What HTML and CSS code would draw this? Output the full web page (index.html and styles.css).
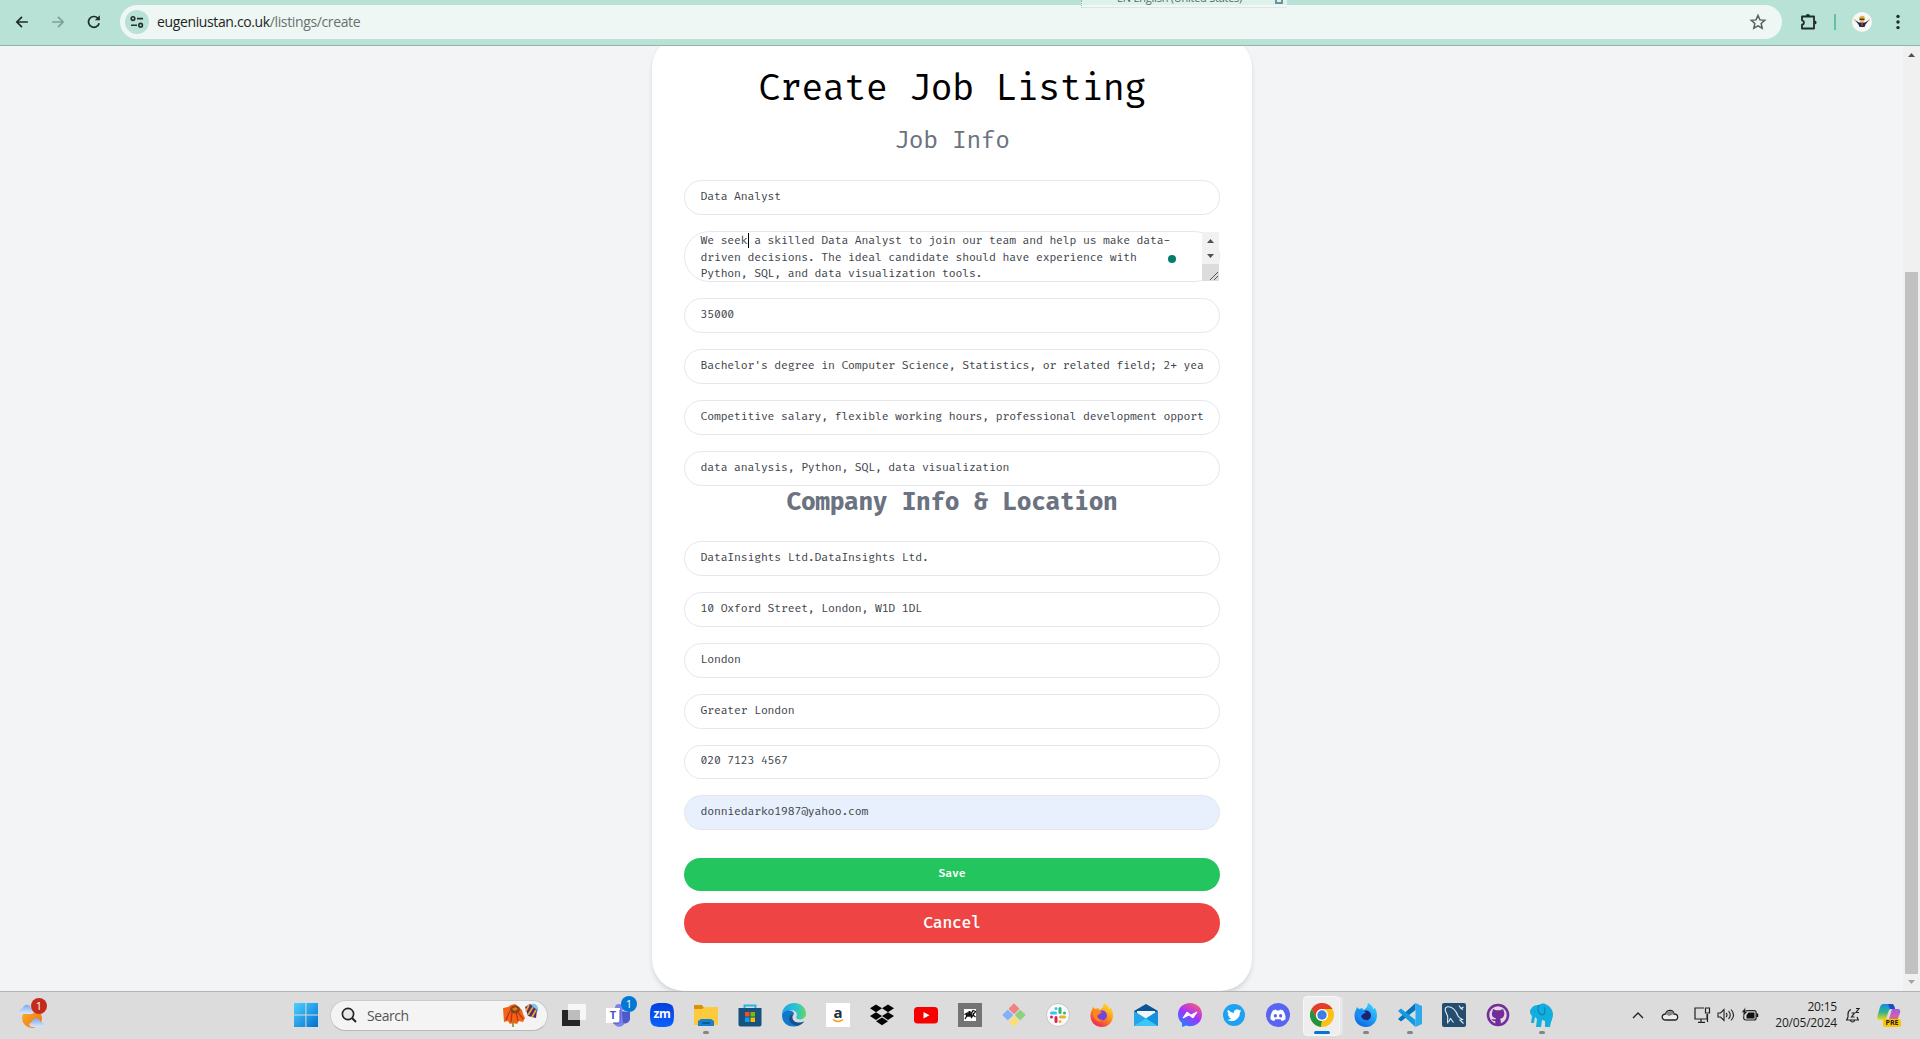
FILE: index.html
```html
<!DOCTYPE html>
<html lang="en">
<head>
<meta charset="utf-8">
<title>Create Job Listing</title>
<link rel="stylesheet" href="styles.css">
</head>
<body>
<div class="desktop">
  <header class="toolbar">
    <svg class="nav-icon" viewBox="0 0 24 24"><path d="M19 12H6M12 5.800l-6.200 6.200 6.200 6.200" fill="none" stroke="#1f2b28" stroke-width="2"/></svg>
    <svg class="nav-icon" viewBox="0 0 24 24"><path d="M5 12h13M12 5.800l6.200 6.200-6.200 6.200" fill="none" stroke="#7f9f95" stroke-width="2"/></svg>
    <svg class="nav-icon" viewBox="0 0 24 24"><path d="M18.200 13.500a6.500 6.500 0 1 1-1.700-6.200L18.500 9.300" fill="none" stroke="#1f2b28" stroke-width="2"/><path d="M19 4v6h-6z" fill="#1f2b28"/></svg>
    <div class="address">
      <div class="site-chip"><svg width="16" height="16" viewBox="0 0 16 16" fill="none" stroke="#26302e" stroke-width="1.600"><circle cx="4" cy="4.600" r="1.800"/><path d="M8 4.600h6M2 11.200h6"/><circle cx="11.600" cy="11.200" r="1.800"/></svg></div>
      <div class="url">eugeniustan.co.uk<span class="path">/listings/create</span></div>
      <svg class="star" width="18" height="18" viewBox="0 0 24 24"><path d="M12 3.300l2.600 5.900 6.400.6-4.800 4.200 1.400 6.200L12 17l-5.600 3.200L7.800 14 3 9.800l6.400-.6z" fill="none" stroke="#555f5c" stroke-width="2"/></svg>
    </div>
    <svg class="puzzle" width="20" height="20" viewBox="0 0 20 20"><path d="M3 4.500h12v12H3v-3.800c2.700-.6 2.700-3.800 0-4.400z" fill="none" stroke="#1f2b28" stroke-width="1.800" stroke-linejoin="round"/><path d="M6.800 4a2.100 2.100 0 0 1 4.200 0zM15.500 8.400a2.100 2.100 0 0 1 0 4.200z" fill="#1f2b28"/></svg>
    <div class="divider"></div>
    <svg class="avatar" width="20" height="20" viewBox="0 0 20 20"><circle cx="10" cy="10" r="10" fill="#f6f8f7"/><path d="M3 8l4 2.500h6L17 8l-3.500 4.500-1 2.500h-5l-1-2.500z" fill="#252b3d"/><path d="M2.300 7.400l1.800 1.800M17.600 7.400l-1.800 1.800" stroke="#e9a56f" stroke-width="1.300"/><circle cx="10" cy="7.300" r="2.600" fill="#e9a56f"/><path d="M7.200 6.200c0-3.200 5.600-3.500 5.700 0z" fill="#e3b51d"/><path d="M7.500 7.200h5" stroke="#222" stroke-width="1.200"/><path d="M10 11v3" stroke="#e23b32" stroke-width="1.200"/></svg>
    <svg class="menu" width="6" height="16" viewBox="0 0 6 16" fill="#1f2b28"><circle cx="3" cy="2.400" r="1.700"/><circle cx="3" cy="8" r="1.700"/><circle cx="3" cy="13.600" r="1.700"/></svg>
    <div class="lang-bar"><span>EN English (United States)</span><i></i></div>
  </header>

  <div class="viewport">
    <main class="page">
      <form class="card">
        <h1>Create Job Listing</h1>
        <h2 class="light">Job Info</h2>
        <div class="field">Data Analyst</div>
        <div class="area">
          <div class="area-text">We seek a skilled Data Analyst to join our team and help us make data-<br>driven decisions. The ideal candidate should have experience with<br>Python, SQL, and data visualization tools.</div>
          <div class="caret"></div><div class="dot"></div>
          <svg class="area-bar" width="17" height="49" viewBox="0 0 17 49"><path d="M0 0h17v32H0z" fill="#f1f1f1"/><path d="M0 32h17v17H0z" fill="#dcdcdc"/><path d="M5 11l3.500-4 3.500 4zM5 22l3.500 4 3.500-4z" fill="#505050"/><path d="M8 48l8-8M12 48l4-4" stroke="#555" stroke-width="1"/></svg>
        </div>
        <div class="field">35000</div>
        <div class="field">Bachelor's degree in Computer Science, Statistics, or related field; 2+ yea</div>
        <div class="field">Competitive salary, flexible working hours, professional development opport</div>
        <div class="field last">data analysis, Python, SQL, data visualization</div>
        <h2>Company Info &amp; Location</h2>
        <div class="field">DataInsights Ltd.DataInsights Ltd.</div>
        <div class="field">10 Oxford Street, London, W1D 1DL</div>
        <div class="field">London</div>
        <div class="field">Greater London</div>
        <div class="field">020 7123 4567</div>
        <div class="field filled">donniedarko1987@yahoo.com</div>
        <div class="btn save">Save</div>
        <div class="btn cancel">Cancel</div>
      </form>
    </main>
    <div class="scrollbar">
      <svg width="17" height="17" viewBox="0 0 17 17"><path d="M5 11l3.500-4 3.500 4z" fill="#505050"/></svg>
      <div class="thumb"></div>
      <svg width="17" height="17" viewBox="0 0 17 17"><path d="M5 6l3.500 4L12 6z" fill="#a3a3a3"/></svg>
    </div>
  </div>

  <footer class="taskbar">
    <div class="weather">
      <svg width="30" height="32" viewBox="0 0 30 32"><defs><linearGradient id="sun" x2="1" y2="1"><stop stop-color="#f9b52c"/><stop offset="1" stop-color="#ee6c12"/></linearGradient><linearGradient id="cl" x2="0" y2="1"><stop stop-color="#7fa9ee"/><stop offset="1" stop-color="#dbe7fb"/></linearGradient></defs><circle cx="14" cy="19" r="10" fill="url(#sun)"/><path d="M5 15c-5 0-4.500-5-.5-5.500C5.500 4.500 12 4.500 13 9c5 .5 4 6 0 6z" fill="url(#cl)"/><path d="M14.500 28c-4.500 0-4-4.600-.5-5 1-5 7.500-5 8.500 0 4.500.4 4.500 5 1 5z" fill="url(#cl)"/></svg>
      <span class="badge red">1</span>
    </div>
    <div class="app"><svg width="24" height="24" viewBox="0 0 24 24"><defs><linearGradient id="win" x2="1" y2="1"><stop stop-color="#4fd0ff"/><stop offset="1" stop-color="#0070d0"/></linearGradient></defs><path d="M0 0h11.400v11.400H0zM12.400 0H24v11.400H12.400zM0 12.400h11.400V24H0zM12.400 12.400H24V24H12.400z" fill="url(#win)"/></svg></div>
    <div class="search">
      <svg width="16" height="16" viewBox="0 0 16 16"><circle cx="7" cy="7" r="5.600" fill="#e8e8e8" stroke="#222" stroke-width="1.600"/><path d="M11 11l4 4" stroke="#222" stroke-width="1.900"/></svg>
      <span>Search</span>
      <svg class="flower" width="38" height="24" viewBox="0 0 38 24"><path d="M1 5l5-1 3-2 4-1 4 3 3 3 1 4 2 4-2 4-4-1-2 3-4-1-3 1-2-3-4 1z" fill="#f06415"/><path d="M8 8L4 17M10 9l-1 10M14 9l2 9M15 8l6 8" stroke="#c32b17" stroke-width="1.200"/><path d="M11 20v4" stroke="#6c8a1d" stroke-width="1.500"/><ellipse cx="13" cy="6.500" rx="5" ry="4" fill="#8d421a"/><path d="M10 6l3-2 3 2-3 2z" fill="#d78120"/><path d="M28 2c3-3 9-1 8 6l-3 2z" fill="#79c9f0"/><path d="M23 4l5-3 7 6-1 8-8-2z" fill="#4d315f"/><path d="M27 2l-3 6M31 4l-5 8M34 7l-4 7" stroke="#f0a33a" stroke-width="1.700"/></svg>
    </div>
    <div class="apps">
      <div class="app"><svg width="24" height="24" viewBox="0 0 24 24"><path d="M0 7h18v16H0z" fill="#252525"/><path d="M6 1h18v16H6z" fill="#f7f7f7"/><path d="M6 7h12v10H6z" fill="#bdbdbd"/></svg></div>
      <div class="app"><svg width="24" height="24" viewBox="0 0 24 24"><circle cx="13" cy="5" r="4" fill="#7b83eb"/><path d="M8 8h11v10a6 6 0 0 1-11 3z" fill="#7b83eb"/><path d="M16 9h8v6a5 5 0 0 1-7 5z" fill="#5059c9"/><path d="M0 5h14v15H0z" fill="#fff"/><path d="M14 7v11l-1 2H7" fill="none" stroke="#4b53bc"/></svg><span class="teams-t">T</span><span class="badge blue">1</span></div>
      <div class="app"><svg width="24" height="24" viewBox="0 0 24 24"><defs><linearGradient id="zm" x2="0" y2="1"><stop stop-color="#003fe0"/><stop offset="1" stop-color="#0d60ff"/></linearGradient></defs><path d="M12 0C22 0 24 2 24 12s-2 12-12 12S0 22 0 12 2 0 12 0z" fill="url(#zm)"/></svg><span class="zoom-t">zm</span></div>
      <div class="app run"><svg width="24" height="24" viewBox="0 0 24 24"><path d="M0 2h8l2 3-2 3H0z" fill="#d89305"/><path d="M0 6h8l3-2h13v18H0z" fill="#fdc93d"/><path d="M4 23v-5l3-2h10l3 2v5z" fill="#1680ce"/><path d="M8 19h8v2H8z" fill="#0d5b9c"/></svg></div>
      <div class="app"><svg width="24" height="24" viewBox="0 0 24 24"><path d="M6.500 6V2.500h11V6" fill="none" stroke="#27b4ea" stroke-width="2"/><path d="M.5 5h23v16.500a2 2 0 0 1-2 2h-19a2 2 0 0 1-2-2z" fill="#17517f"/><path d="M7 9h4.500v4.500H7z" fill="#f25022"/><path d="M12.500 9H17v4.500h-4.500z" fill="#7fba00"/><path d="M7 14.500h4.500V19H7z" fill="#00a4ef"/><path d="M12.500 14.500H17V19h-4.500z" fill="#ffb900"/></svg></div>
      <div class="app"><svg width="24" height="24" viewBox="0 0 24 24"><defs><linearGradient id="ed" x2="1"><stop stop-color="#1ca5e3"/><stop offset=".6" stop-color="#2cc3d2"/><stop offset="1" stop-color="#65d85b"/></linearGradient></defs><path d="M0 12C0 5 5 0 12 0s12 5 12 10.500c0 4-3 6-6 6s-4.500-1-3.500-3C16 9 12 6.500 8 7.500 4 8 1 10 0 12z" fill="url(#ed)"/><path d="M0 12c1-3 4-5 8-4.500 2 .3 4 1.500 4 3.500-4 1-3 8 4 8.500 3 .2 5-.5 6-1C17 26 0 26 0 12z" fill="#1277ca"/><path d="M8.500 12c-4 5 1 11 8 10.500 3-1 5-3 5.500-4-5 2.500-11 1-11.500-3.500-.2-2 .5-3 1.500-4z" fill="#174f91"/></svg></div>
      <div class="app"><div class="amazon">a<svg width="12" height="4" viewBox="0 0 12 4"><path d="M1 .5q5 4 10 0" fill="none" stroke="#f90" stroke-width="1.400"/></svg></div></div>
      <div class="app"><svg width="24" height="24" viewBox="0 0 24 24" fill="#050505"><path d="M6 1.500l6 3.800-6 3.900L0 5.300zM18 1.500l6 3.800-6 3.900-6-3.900zM6 9.200l6 3.900L6 17l-6-3.900zM18 9.200l6 3.900-6 3.900-6-3.900zM12 14.500l6 3.800-6 3.900-6-3.900z"/></svg></div>
      <div class="app"><svg width="24" height="24" viewBox="0 0 24 24"><rect y="4" width="24" height="16.500" rx="3.500" fill="#f70000"/><path d="M9.500 9v6.500l6-3.200z" fill="#fff"/></svg></div>
      <div class="app"><svg width="24" height="24" viewBox="0 0 24 24"><path d="M0 0h24v24H0z" fill="#747474"/><path d="M6 6h12v12H6z" fill="#fff"/><path d="M6.500 11.500l3-1.500h4l1.500-2.500 2.500 1-1 1.500-1 .5v2l2 1.500M8.500 11v2.500L7 16M9 13h5.500l-1.500 2" fill="none" stroke="#111" stroke-width="1.300"/><path d="M8.500 10.500h6V13h-6zM10.500 8h2v3h-2z" fill="#111"/></svg></div>
      <div class="app"><svg width="24" height="24" viewBox="0 0 24 24"><g transform="rotate(45 12 12)"><rect x="3.700" y="3.700" width="7.800" height="7.800" rx="1" fill="#f28281"/><rect x="12.500" y="3.700" width="7.800" height="7.800" rx="1" fill="#8ed17d"/><rect x="3.700" y="12.500" width="7.800" height="7.800" rx="1" fill="#84b0fa"/><rect x="12.500" y="12.500" width="7.800" height="7.800" rx="1" fill="#fbdc79"/></g></svg></div>
      <div class="app"><svg width="24" height="24" viewBox="0 0 24 24"><circle cx="12" cy="12" r="11.500" fill="#fafafa" stroke="#c6c6c6"/><g fill="none" stroke-width="3" stroke-linecap="round"><path d="M5.500 10h4M10 5.500v.1" stroke="#36c5f0"/><path d="M14 5.500v4M18.500 10v.1" stroke="#2eb67d"/><path d="M14.500 14h4M14 18.500v.1" stroke="#ecb22e"/><path d="M10 14.500v4M5.500 14v.1" stroke="#e01e5a"/></g></svg></div>
      <div class="app"><svg width="24" height="24" viewBox="0 0 24 24"><defs><linearGradient id="ff" x1=".8" x2=".2" y2="1"><stop stop-color="#ffe52e"/><stop offset=".5" stop-color="#ff8a1c"/><stop offset="1" stop-color="#ed1860"/></linearGradient></defs><path d="M1 9l2-5 2 2 3-1 2 2 3-3 1-4c4 2 5 4 5 6l2-1c5 9 0 19-9 19C3 24-1 16 1 9z" fill="url(#ff)"/><circle cx="12" cy="12.500" r="5" fill="#7544da"/><path d="M3 8c4-2 7-1 9 2-3 0-3 2-5 3 1 3 3 4 6 4-5 4-11-1-10-9z" fill="#ff8718"/></svg></div>
      <div class="app"><svg width="24" height="24" viewBox="0 0 24 24"><path d="M0 8l12-7 12 7v5H0z" fill="#095494"/><path d="M3 8h18v10H3z" fill="#f4f4f4"/><path d="M0 8l12 7.500L24 8v15H0z" fill="#25a6e8"/><path d="M0 23l12-7.500L24 8v15z" fill="#39c7f5"/><path d="M12 15.500L24 23V8z" fill="#1591de"/></svg></div>
      <div class="app"><svg width="24" height="24" viewBox="0 0 24 24"><defs><linearGradient id="ms" x1=".2" y1="1" x2=".8" y2="0"><stop stop-color="#1787ff"/><stop offset=".5" stop-color="#a033ff"/><stop offset="1" stop-color="#ff5d79"/></linearGradient></defs><path d="M12 0C5 0 0 5 0 11.600 0 15 1.500 18 4 20v4l4-1.500c8 2.500 16-2.500 16-11C24 5 19 0 12 0z" fill="url(#ms)"/><path d="M5 15l4-6 4 3 6-3-4 6-4-3z" fill="#fff" stroke="#fff" stroke-linejoin="round"/></svg></div>
      <div class="app"><svg width="24" height="24" viewBox="0 0 24 24"><circle cx="12" cy="12" r="11" fill="#1da1f2"/><path transform="translate(5 5) scale(.6)" d="M24 4.600c-.9.400-1.800.7-2.800.8a5 5 0 0 0 2.100-2.700c-1 .6-2 1-3.100 1.200A4.900 4.900 0 0 0 11.800 8.400 14 14 0 0 1 1.700 3.100a4.900 4.900 0 0 0 1.500 6.600c-.8 0-1.600-.2-2.200-.6a4.900 4.900 0 0 0 3.900 4.900c-.7.2-1.500.2-2.200.1a4.900 4.900 0 0 0 4.600 3.400A10 10 0 0 1 0 19.500 14 14 0 0 0 21.500 7.100c1-.7 1.800-1.500 2.500-2.500z" fill="#fff"/></svg></div>
      <div class="app"><svg width="24" height="24" viewBox="0 0 24 24"><circle cx="12" cy="12" r="12" fill="#5865f2"/><path d="M7 7.200l3-.8.700 1.200h2.600l.7-1.200 3 .8c2 3 2.800 6 2.500 9-1.300 1-2.500 1.500-3.800 1.800l-1-1.700H9.300l-1 1.700c-1.300-.3-2.500-.8-3.800-1.800-.3-3 .5-6 2.500-9z" fill="#fff"/><ellipse cx="9.400" cy="12.700" rx="1.600" ry="1.800" fill="#5865f2"/><ellipse cx="14.600" cy="12.700" rx="1.600" ry="1.800" fill="#5865f2"/></svg></div>
      <div class="app active"><svg width="24" height="24" viewBox="0 0 24 24"><circle cx="12" cy="12" r="12" fill="#fbc116"/><path d="M1.600 6A12 12 0 0 1 22.400 6H12a6 6 0 0 0-5.200 9z" fill="#e33b2e"/><path d="M1.600 6l5.200 9A6 6 0 0 0 12 18l-1 6A12 12 0 0 1 1.600 6z" fill="#229342"/><path d="M12 18l5.200-3L12 24h-1z" fill="#fbc116"/><circle cx="12" cy="12" r="6" fill="#fff"/><circle cx="12" cy="12" r="4.700" fill="#3d7de8"/></svg></div>
      <div class="app run"><svg width="24" height="24" viewBox="0 0 24 24"><defs><linearGradient id="fd" x1=".8" x2=".2" y2="1"><stop stop-color="#38d5ff"/><stop offset="1" stop-color="#0864e5"/></linearGradient></defs><path d="M1 9l2-5 2 2 3-1 2 2 3-3 1-4c4 2 5 4 5 6l2-1c5 9 0 19-9 19C3 24-1 16 1 9z" fill="url(#fd)"/><circle cx="12" cy="12.500" r="5" fill="#202375"/><path d="M3 8c4-2 7-1 9 2-3 0-3 2-5 3 1 3 3 4 6 4-5 4-11-1-10-9z" fill="#168df5"/></svg></div>
      <div class="app run"><svg width="24" height="24" viewBox="0 0 24 24"><path d="M17.500 0v7L3 18.500 0 16z" fill="#0873b9"/><path d="M17.500 24v-7L3 5.500 0 8z" fill="#159be0"/><path d="M17.500 0L24 3v18l-6.500 3z" fill="#2caaf0"/></svg></div>
      <div class="app"><svg width="24" height="24" viewBox="0 0 24 24"><rect width="24" height="24" rx="2" fill="#244d70"/><path d="M6 20.500c-1.500-3 1-5-1-9S2 4.500 5.500 3.800C11 3.500 14.500 9 16 13c1 2 3 2.500 4.500 3.500L18 17l3.500 3.500M6.500 19l2-3.500 3 4M17 2.500l2 3 2.500-1.500M19 5.500l2 1" fill="none" stroke="#e5edf2" stroke-width="1.100"/></svg></div>
      <div class="app"><svg width="24" height="24" viewBox="0 0 24 24"><circle cx="12" cy="12" r="10" fill="none" stroke="#752b9b" stroke-width="2.600"/><path d="M7 6l3 1.300h4L17 6c1 3 2 4 .8 7-.8 2-2.300 2.500-3.800 2.800.8 1 .8 2 .8 5.200H9.300v-3c-2 .5-3-1-4-2l4 .5.800-1.200c-4-.5-5-4-3.600-7z" fill="#752b9b"/></svg></div>
      <div class="app run"><svg width="24" height="24" viewBox="0 0 24 24"><path d="M1 6c2-4 6-4 8-4 2-2 6-2 8 0 4 2 6 6 6 10 0 2-1 3-1 5l-1 2-1 5h-5v-6l-3-1-1 7H6l1-8-2-2-1 6H1l1-7C0 11-1 8 1 6z" fill="#12aede"/><path d="M9 2c-2 4-1 9 3 10 3 0 4-5 2-8M4 8.500h1" fill="none" stroke="#0883b1" stroke-width="1.100"/></svg></div>
    </div>
    <div class="tray">
      <svg width="16" height="16" viewBox="0 0 16 16"><path d="M3 11l5-5 5 5" fill="none" stroke="#222" stroke-width="1.400"/></svg>
      <svg class="cloud" width="18" height="16" viewBox="0 0 18 16"><path d="M5 13c-5 0-5-6-.5-6C6 2.500 12 2 13 7c5 0 4.500 6 1 6z" fill="#ececec" stroke="#222" stroke-width="1.300"/><path d="M4.500 7C7 3 12 3 13 7l-5 2z" fill="#888"/></svg>
      <svg class="net" width="18" height="18" viewBox="0 0 18 18"><path d="M11 2H2v11h12V8M8 13v3M5 16.300h7M14.500 8v8" fill="none" stroke="#222" stroke-width="1.200"/><path d="M12.500 2h4v5h-4z" fill="none" stroke="#222" stroke-width="1.200"/></svg>
      <svg class="sound" width="18" height="16" viewBox="0 0 18 16"><path d="M1 6h2.500L7 2.500v11L3.500 10H1zM9 6q2 2 0 4M11.500 4q3.500 4 0 8M14 2.500q5 5.500 0 11" fill="none" stroke="#222" stroke-width="1.100"/></svg>
      <svg class="battery" width="18" height="16" viewBox="0 0 18 16"><rect x="2.700" y="3.600" width="12.400" height="9.400" rx="2" fill="none" stroke="#222" stroke-width="1.200"/><path d="M5.500 8l2-2.500h6v6h-8zM15.500 6.500h1.700v3.600h-1.700z" fill="#111"/><path d="M4.500 0L.5 5.500h2.500L1.500 10 7 4.200H4.200z" fill="#111" stroke="#dcdcdc" stroke-width=".5"/></svg>
      <div class="clock">20:15<br>20/05/2024</div>
      <svg class="bell" width="16" height="18" viewBox="0 0 16 18"><path d="M6 3.500C3.800 4.300 3 6 3 8v3l-1.300 3h11.600L12 11M5.500 14.500c.4 2 3.600 2 4 0M6.500 7h3l-3 4h3M11 2.500h3l-3 4h3" fill="none" stroke="#222" stroke-width="1.200"/></svg>
      <div class="copilot"><svg width="24" height="24" viewBox="0 0 24 24"><defs><linearGradient id="c1" x2="0" y2="1"><stop stop-color="#168be8"/><stop offset=".5" stop-color="#2eb48b"/><stop offset="1" stop-color="#f2d61c"/></linearGradient><linearGradient id="c2" x2="0" y2="1"><stop stop-color="#a45bea"/><stop offset="1" stop-color="#fb6b65"/></linearGradient></defs><path d="M6 1h9q2 0 3 5h-4q-2 0-3 4l-2 7H3q-4 0-2-6l2-7q1-3 3-3z" fill="url(#c1)"/><path d="M11 1h4q2 0 3 5h-5z" fill="#1b4cc4"/><path d="M15 6h6q3 0 2 4l-3 8q-1 3-3 3H9q2-1 3-5z" fill="url(#c2)"/></svg><span>PRE</span></div>
    </div>
  </footer>
</div>
</body>
</html>
```
FILE: styles.css
```css
* { box-sizing: border-box; }
body { margin: 0; overflow: hidden; font-family: "Segoe UI", "Open Sans", "Noto Sans", sans-serif; }
svg { display: block; flex: none; }
.desktop { width: 1920px; height: 1039px; display: flex; flex-direction: column; }

.toolbar { position: relative; height: 46px; flex: none; display: flex; align-items: center; padding: 0 9px 2px 12px; background: #b8e2d6; border-bottom: 1px solid #92b5ab; }
.nav-icon { width: 20px; height: 20px; margin-right: 16px; }
.address { width: 1662px; height: 34px; flex: none; border-radius: 17px; background: #eef7f4; display: flex; align-items: center; padding: 0 15px 0 5px; }
.site-chip { width: 24px; height: 24px; border-radius: 50%; background: #b8e2d6; display: grid; place-items: center; }
.url { margin-left: 8px; font-size: 14px; line-height: 20px; letter-spacing: -0.37px; color: #1d2523; white-space: nowrap; }
.path { color: #68716e; }
.star { margin-left: auto; }
.puzzle { margin-left: 17px; }
.divider { width: 2px; height: 16px; margin-left: 15px; background: #65bfa5; }
.avatar { margin-left: 16px; }
.menu { margin-left: 23px; }
.lang-bar { position: absolute; left: 1081px; top: 0; width: 206px; height: 8px; overflow: hidden; background: rgba(242, 250, 247, .65); border-bottom: 1px solid #dde5e2; border-left: 1px dotted #a5aeab; }
.lang-bar span { position: absolute; left: 35px; top: -10px; font-size: 11px; line-height: 15px; letter-spacing: -0.25px; white-space: nowrap; color: #586662; }
.lang-bar i { position: absolute; left: 193px; top: -6px; width: 8px; height: 10px; border: 2px solid #6d9499; }

.viewport { height: 945px; flex: none; display: flex; overflow: hidden; background: #f3f4f6; }
.page { flex: 1; display: flex; justify-content: center; align-items: flex-start; }
.card { width: 600px; height: 955px; margin-top: -10px; margin-left: 1px; padding: 33px 32px 32px; background: #fff; border-radius: 32px; box-shadow: 0 4px 6px -1px rgba(0,0,0,.1), 0 2px 4px -1px rgba(0,0,0,.08); font-family: "Fira Code", "DejaVu Sans Mono", monospace; }
h1 { margin: 0; height: 52px; font-size: 36px; line-height: 40px; font-weight: 400; letter-spacing: -0.62px; text-align: center; color: #000; }
h2 { margin: 0; height: 55.800px; padding-top: 1px; font-size: 24px; line-height: 32px; font-weight: 700; letter-spacing: -0.38px; text-align: center; color: #6b7280; }
.light { height: 59.200px; margin: 0; padding-top: 4px; font-weight: 400; }
.field { height: 34.800px; margin-bottom: 16px; padding: 7.800px 15.500px 0; border: 1px solid #e5e7eb; border-radius: 18px; font-size: 11.200px; line-height: 16.800px; letter-spacing: -0.175px; color: #40444a; white-space: nowrap; overflow: hidden; }
.last { margin-bottom: 0; }
.filled { background: #e8f0fe; margin-bottom: 27.800px; }
.area { position: relative; height: 51.400px; margin-bottom: 16px; padding: 1px 0 0 15.500px; border: 1px solid #e5e7eb; border-radius: 26px; }
.area-text { font-size: 11.200px; line-height: 16.600px; letter-spacing: -0.175px; color: #40444a; white-space: nowrap; }
.caret { position: absolute; left: 63px; top: 1px; width: 1px; height: 15px; background: #000; }
.dot { position: absolute; left: 483px; top: 23px; width: 8px; height: 8px; border-radius: 50%; background: #027e6f; }
.area-bar { position: absolute; right: 0; top: 0; }
.btn { display: flex; justify-content: center; color: #fff; border-radius: 20px; }
.save { height: 33px; margin-bottom: 12px; padding-top: 8px; background: #22c55e; font-size: 11.200px; line-height: 16.800px; font-weight: 600; letter-spacing: -0.17px; }
.cancel { height: 40px; padding-top: 8px; background: #ef4444; font-size: 16px; line-height: 24px; font-weight: 500; letter-spacing: -0.25px; }
.scrollbar { width: 17px; flex: none; background: #f0f0f0; display: flex; flex-direction: column; }
.thumb { width: 13px; height: 702px; margin: auto auto 0; background: #c1c1c1; }

.taskbar { height: 48px; flex: none; display: flex; align-items: center; padding-bottom: 1px; background: #dcdcdc; border-top: 1px solid #b1b2b2; }
.weather { position: relative; width: 284px; padding-left: 18px; }
.badge { position: absolute; width: 15px; height: 15px; border-radius: 50%; color: #fff; font-size: 11px; line-height: 15px; text-align: center; }
.red { left: 31px; top: -1px; background: #c42b1c; width: 16px; height: 16px; }
.blue { left: 25px; top: 0; background: #0078d4; width: 16px; height: 16px; }
.app { position: relative; width: 44px; height: 38px; display: grid; place-items: center; }
.search { width: 218px; height: 31px; margin: 0 4px 0 2px; padding: 0 7px 0 10px; display: flex; align-items: center; gap: 10px; border: 1px solid #cbcbcb; border-bottom: 1px solid #b8b8b8; border-radius: 16px; background: #f4f4f4; font-size: 14px; letter-spacing: -0.45px; color: #555; }
.flower { margin-left: auto; }
.apps { display: flex; }
.teams-t { position: absolute; left: 10px; top: 12px; width: 14px; text-align: center; color: #4b53bc; font-size: 11px; line-height: 14px; font-weight: 700; }
.zoom-t { position: absolute; left: 10px; top: 11px; width: 24px; text-align: center; color: #fff; font-size: 12px; line-height: 14px; font-weight: 700; letter-spacing: -0.4px; }
.run::after, .active::after { content: ""; position: absolute; left: 19px; bottom: 0; width: 6px; height: 3px; border-radius: 2px; background: #858585; }
.active::before { content: ""; position: absolute; left: 3px; top: 0; width: 35px; height: 38px; background: #eee; border: 1px solid #f7f7f7; border-radius: 4px; box-shadow: 4px 0 0 -1px #e7e7e7; }
.active svg { position: relative; }
.active::after { left: 14px; width: 16px; background: #0078d4; }
.amazon { width: 24px; height: 24px; background: #fff; color: #222f3e; font-size: 15px; line-height: 14px; font-weight: 700; display: flex; flex-direction: column; align-items: center; padding-top: 2px; }
.tray { margin-left: auto; padding-right: 19px; display: flex; align-items: center; }
.cloud { margin-left: 15px; }
.net { margin-left: 14px; }
.sound { margin-left: 6px; }
.battery { margin-left: 6px; }
.clock { width: 78px; text-align: right; font-size: 12px; line-height: 16px; letter-spacing: -0.2px; color: #1c1c1c; }
.bell { margin-left: 8px; }
.copilot { position: relative; margin-left: 16px; }
.copilot span { position: absolute; left: 6px; top: 16px; width: 18px; height: 8px; border-radius: 2px; background: #ffc400; color: #222; font-size: 7px; line-height: 8px; font-weight: 700; text-align: center; }
```
